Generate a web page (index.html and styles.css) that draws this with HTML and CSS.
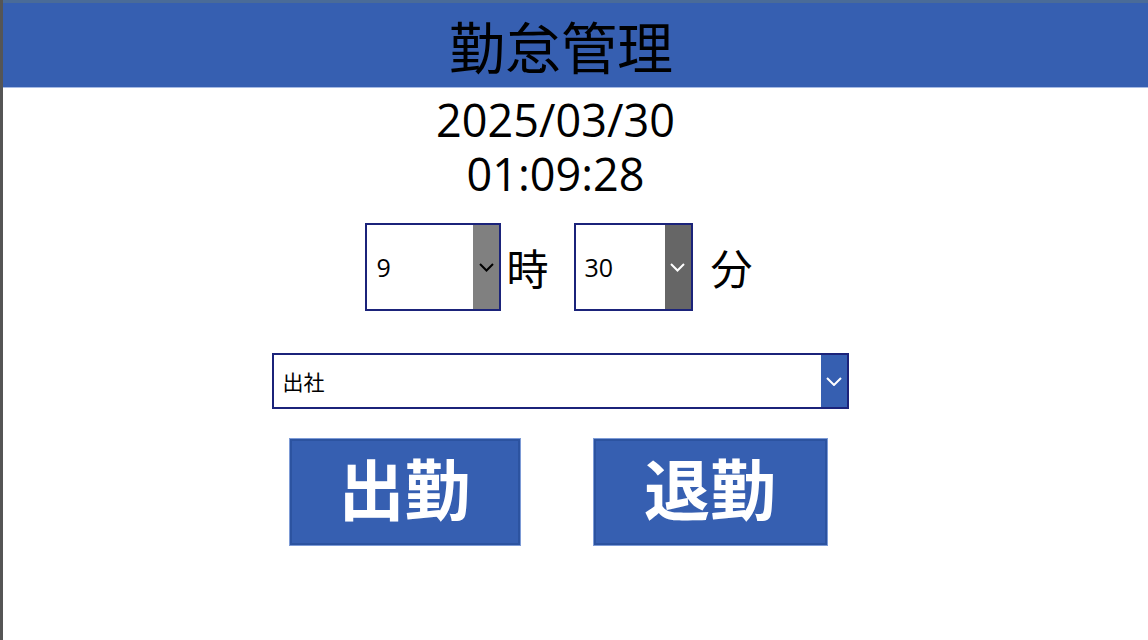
FILE: index.html
```html
<!DOCTYPE html>
<html lang="ja">
<head>
  <meta charset="UTF-8">
  <title>勤怠管理</title>
  <link rel="stylesheet" href="styles.css">
</head>
<body>
  <div class="header">
    <h1 class="header-title">勤怠管理</h1>
  </div>
  <div class="main">
    <div class="clock">
      <div class="clock-date">2025/03/30</div>
      <div class="clock-time">01:09:28</div>
    </div>

    <div class="time-row">
      <div class="dropdown dropdown-hour">
        <span class="dropdown-value">9</span>
        <span class="dropdown-arrow arrow-gray">
          <svg width="15" height="9" viewBox="0 0 15 9"><polyline points="1,1 7.5,7.5 14,1" fill="none" stroke="#000" stroke-width="2"/></svg>
        </span>
      </div>
      <span class="time-unit unit-hour">時</span>
      <div class="dropdown dropdown-min">
        <span class="dropdown-value">30</span>
        <span class="dropdown-arrow arrow-dark">
          <svg width="15" height="9" viewBox="0 0 15 9"><polyline points="1,1 7.5,7.5 14,1" fill="none" stroke="#fff" stroke-width="2"/></svg>
        </span>
      </div>
      <span class="time-unit unit-min">分</span>
    </div>

    <div class="dropdown dropdown-type">
      <span class="dropdown-value">出社</span>
      <span class="dropdown-arrow arrow-blue">
        <svg width="16" height="9" viewBox="0 0 16 9"><polyline points="1,1 8,8 15,1" fill="none" stroke="#fff" stroke-width="2"/></svg>
      </span>
    </div>

    <div class="actions">
      <button class="btn btn-in">出勤</button>
      <button class="btn btn-out">退勤</button>
    </div>
  </div>
</body>
</html>
```

FILE: styles.css
```css
* {
  margin: 0;
  padding: 0;
  box-sizing: border-box;
}

html, body {
  height: 100%;
}

body {
  background: #fff;
  border-left: 3px solid #555;
  font-family: "Open Sans", "Noto Sans CJK JP", sans-serif;
  color: #000;
}

.header {
  height: 88px;
  background: #365fb1;
  border-top: 3px solid #4a6b98;
  border-bottom: 1px solid #a7bbe4;
  text-align: center;
}

.header-title {
  width: 1114px;
  font-family: "Noto Sans CJK JP", sans-serif;
  font-weight: 400;
  font-size: 56px;
  line-height: 84px;
  color: #000;
  padding-left: 2px;
}

.main {
  width: 1114px;
  display: flex;
  flex-direction: column;
  align-items: center;
}

.clock {
  margin-top: 5px;
  margin-left: -9px;
  text-align: center;
  font-size: 45px;
  line-height: 54px;
}

.time-row {
  margin-top: 22px;
  display: flex;
  align-items: center;
  height: 88px;
  margin-left: -2px;
}

.dropdown {
  display: flex;
  border: 2px solid #1b237a;
  background: #fff;
}

.dropdown-value {
  flex: 1;
  display: flex;
  align-items: center;
  font-size: 25px;
  padding-left: 9px;
}

.dropdown-arrow {
  width: 26px;
  display: flex;
  align-items: center;
  justify-content: center;
}

.arrow-gray {
  background: #808080;
}

.arrow-dark {
  background: #666;
}

.arrow-blue {
  background: #365fb1;
}

.dropdown-hour {
  width: 136px;
  height: 88px;
}

.dropdown-min {
  width: 119px;
  height: 88px;
}

.time-unit {
  font-family: "Noto Sans CJK JP", sans-serif;
  font-size: 42px;
  line-height: 1;
}

.unit-hour {
  margin: 0 25px 0 5px;
}

.unit-min {
  margin-left: 18px;
}

.dropdown-type {
  margin-top: 42px;
  width: 577px;
  height: 56px;
}

.dropdown-type .dropdown-value {
  font-family: "Noto Sans CJK JP", sans-serif;
  font-size: 21px;
  padding-left: 9px;
}

.actions {
  margin-top: 30px;
  display: flex;
  gap: 74px;
  margin-left: -4px;
}

.btn {
  height: 106px;
  padding-bottom: 12px;
  background: #365fb1;
  border: 2px solid #2c53a0;
  outline: 1px solid #7d9bd6;
  color: #fff;
  font-family: "Noto Sans CJK JP", sans-serif;
  font-weight: 700;
  font-size: 66px;
  line-height: 1;
}

.btn-in {
  width: 230px;
}

.btn-out {
  width: 233px;
}
```
